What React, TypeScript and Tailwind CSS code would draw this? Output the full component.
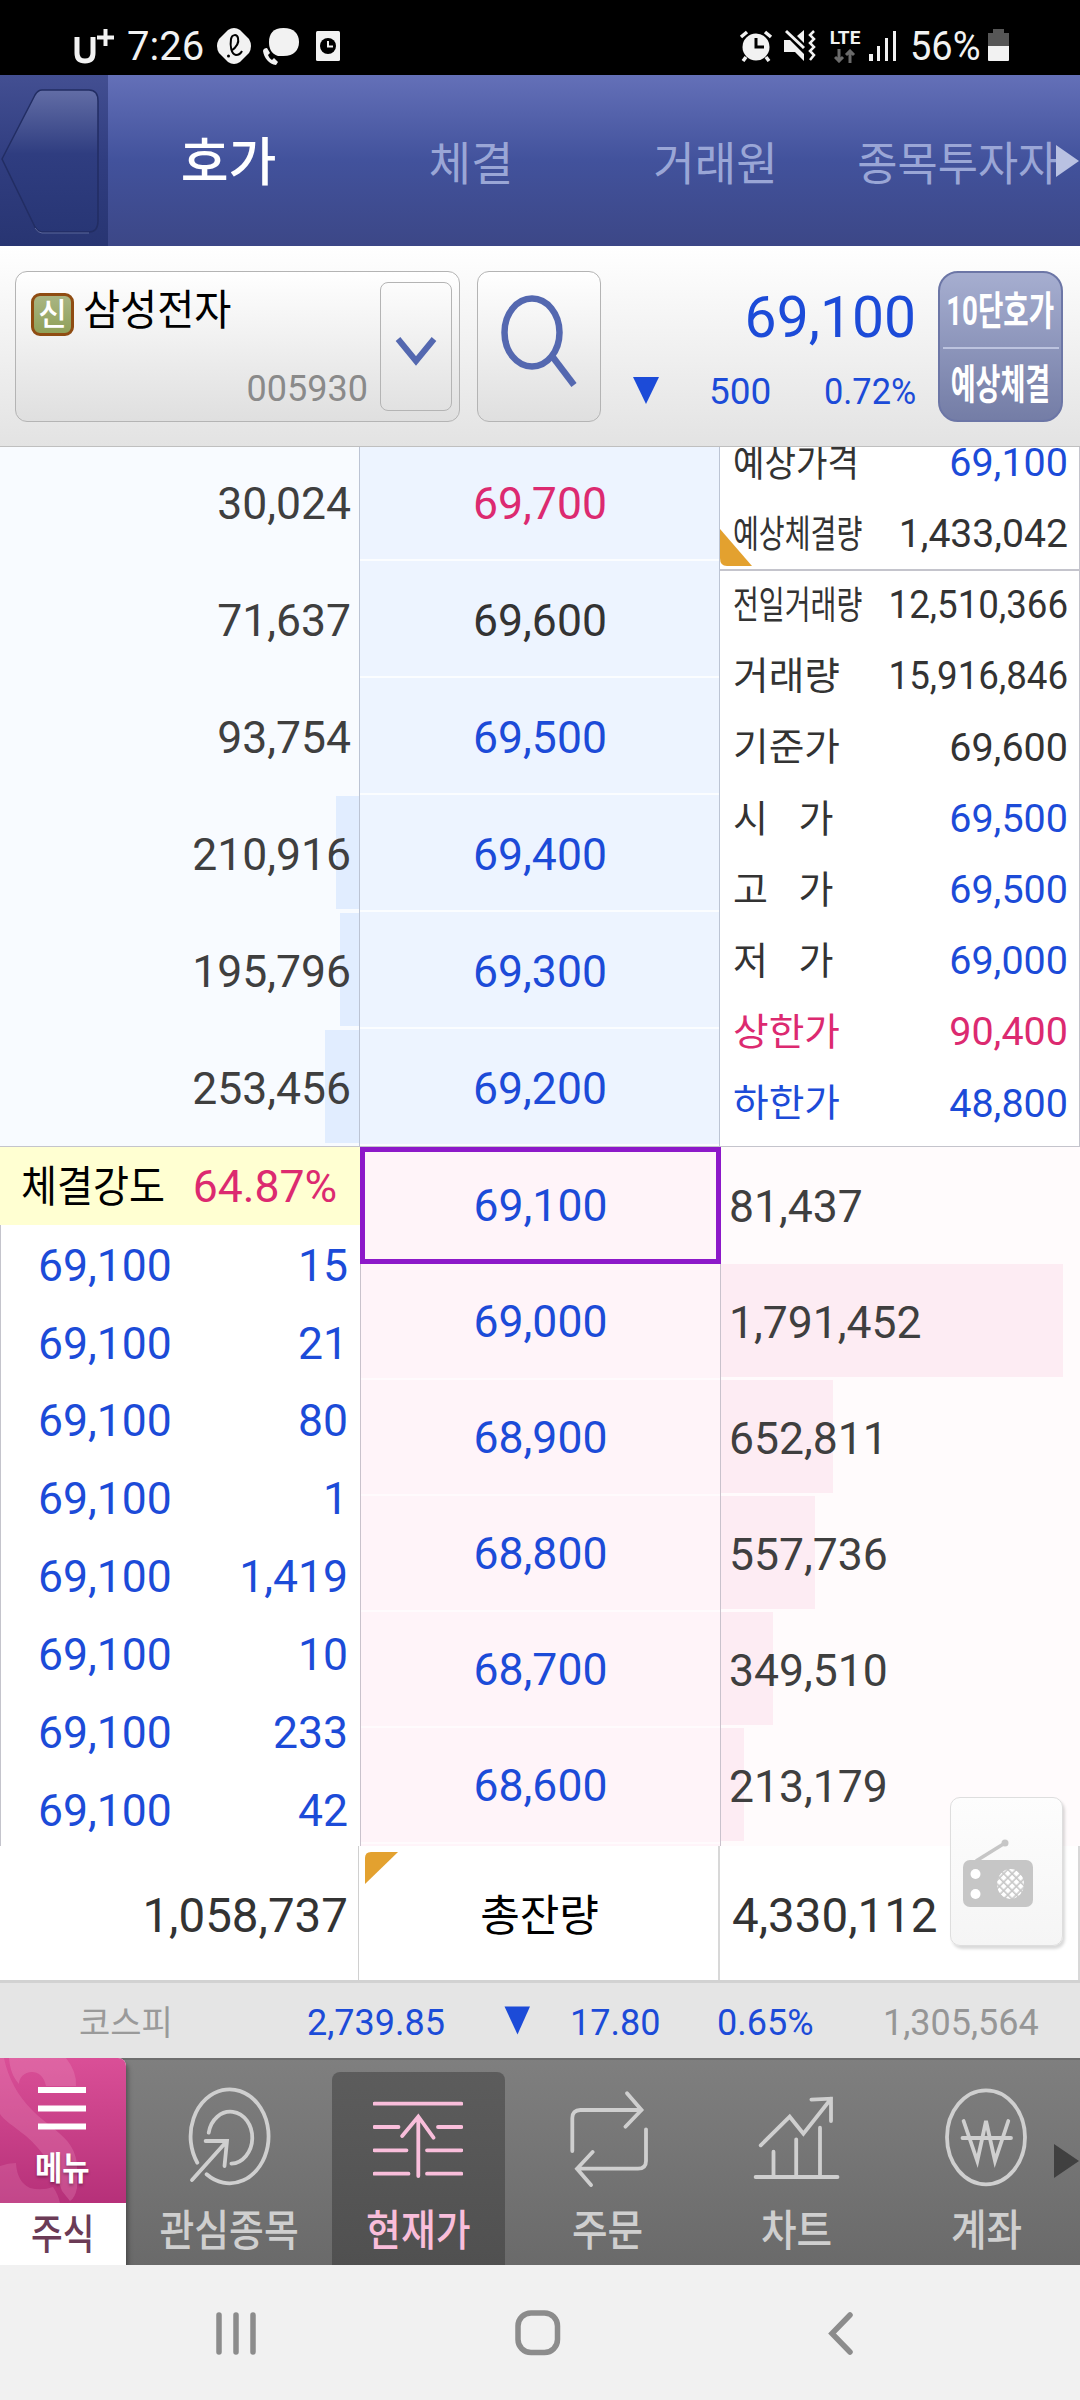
import React from 'react';
import clsx from 'clsx';

const BLUE = 'text-[#1c4bd8]';
const PINK = 'text-[#dc2a70]';
const DARK = 'text-[#333333]';

const tabs = [
    {label: '호가', className: 'text-[52px] font-medium text-white -ml-[2px]'},
    {label: '체결', className: 'text-[46px] text-[#9aa6d6] -ml-[3px]'},
    {label: '거래원', className: 'text-[46px] text-[#9aa6d6] scale-x-[0.98]'},
    {label: '종목투자자', className: 'text-[46px] text-[#9aa6d6] scale-x-[0.95] -ml-[2px]'},
];

const asks = [
    {volume: '30,024', price: '69,700', color: PINK, bar: 0},
    {volume: '71,637', price: '69,600', color: DARK, bar: 0},
    {volume: '93,754', price: '69,500', color: BLUE, bar: 0},
    {volume: '210,916', price: '69,400', color: BLUE, bar: 23},
    {volume: '195,796', price: '69,300', color: BLUE, bar: 19},
    {volume: '253,456', price: '69,200', color: BLUE, bar: 34},
];

const bids = [
    {volume: '81,437', price: '69,100', bar: 0},
    {volume: '1,791,452', price: '69,000', bar: 342},
    {volume: '652,811', price: '68,900', bar: 112},
    {volume: '557,736', price: '68,800', bar: 94},
    {volume: '349,510', price: '68,700', bar: 52},
    {volume: '213,179', price: '68,600', bar: 23},
];

const infos = [
    {label: '예상가격', value: '69,100', color: DARK, valueColor: BLUE, labelScale: 'scale-x-[0.9]', valueScale: ''},
    {label: '예상체결량', value: '1,433,042', color: DARK, valueColor: DARK, labelScale: 'scale-x-[0.74]', valueScale: 'scale-x-[0.99]'},
    {label: '전일거래량', value: '12,510,366', color: DARK, valueColor: DARK, labelScale: 'scale-x-[0.74]', valueScale: 'scale-x-[0.93]'},
    {label: '거래량', value: '15,916,846', color: DARK, valueColor: DARK, labelScale: 'scale-x-[1.02]', valueScale: 'scale-x-[0.93]'},
    {label: '기준가', value: '69,600', color: DARK, valueColor: DARK, labelScale: 'scale-x-[1.02]', valueScale: ''},
    {label: '시 가', value: '69,500', color: DARK, valueColor: BLUE, labelScale: '[word-spacing:21px]', valueScale: ''},
    {label: '고 가', value: '69,500', color: DARK, valueColor: BLUE, labelScale: '[word-spacing:21px]', valueScale: ''},
    {label: '저 가', value: '69,000', color: DARK, valueColor: BLUE, labelScale: '[word-spacing:21px]', valueScale: ''},
    {label: '상한가', value: '90,400', color: PINK, valueColor: PINK, labelScale: 'scale-x-[1.02]', valueScale: ''},
    {label: '하한가', value: '48,800', color: BLUE, valueColor: BLUE, labelScale: 'scale-x-[1.02]', valueScale: ''},
];

const trades = ['15', '21', '80', '1', '1,419', '10', '233', '42'];

const StatusBar: React.FC = () => (
    <div className="h-[75px] bg-black text-[#f2f2f2] relative">
        <div className="h-full flex items-center justify-between pl-[73px] pr-[71px] pt-[19px]">
            <div className="flex items-center h-[56px]">
                <svg width="42" height="40" viewBox="0 0 42 40" fill="none" stroke="currentColor">
                    <path d="M4 10V26q0 8 8 8t8-8V10" strokeWidth="5"/>
                    <path d="M24 10.500H41M32.500 2V19" strokeWidth="4"/>
                </svg>
                <span className="text-[40px] leading-none ml-[12px]">7:26</span>
                <svg className="ml-[12px] -mt-[2px]" width="36" height="38" viewBox="0 0 36 38">
                    <path d="M12 3q6-4 12 0l9 9q4 7 0 14l-9 9q-6 4-12 0l-9-9q-4-7 0-14z" fill="#f2f2f2"/>
                    <path d="M15 24c6-4 8-9 7-13-1-4-6-4-7 1-1 7 0 15 5 16 3 0 5-2 6-4" fill="none" stroke="#000" strokeWidth="2"/>
                    <circle cx="12.500" cy="29" r="1.500"/>
                </svg>
                <svg className="ml-[10px] -mt-[2px]" width="38" height="38" viewBox="0 0 38 38" fill="#f2f2f2">
                    <path d="M21.500 1C32 1 37 7 37 15s-5 14-15.500 14H16C9 27 7 21 7 15 7 7 11 1 21.500 1z"/>
                    <path d="M1 24c1 7 6 13 13 14l2-3-4-4-2 2c-2-1-3-3-4-5l2-2-3-5c-2 0-4 1-4 3z"/>
                </svg>
                <svg className="ml-[15px] -mt-[2px]" width="26" height="32" viewBox="0 0 26 32">
                    <rect x="1" y="1" width="24" height="30" rx="1.500" fill="#f2f2f2"/>
                    <circle cx="13" cy="16" r="8"/>
                    <path d="M13 11v5.500h5" fill="none" stroke="#f2f2f2" strokeWidth="2"/>
                </svg>
            </div>
            <div className="flex items-center h-[56px]">
                <svg className="-mt-[2px]" width="34" height="32" viewBox="0 0 34 32">
                    <circle cx="17" cy="17" r="13.500" fill="#f2f2f2"/>
                    <path d="M2 7l6-5M32 7l-6-5M7 27l-3 4M27 27l3 4" stroke="#f2f2f2" strokeWidth="3.500"/>
                    <path d="M17 8v9h8" fill="none" stroke="#000" strokeWidth="3"/>
                </svg>
                <svg className="ml-[11px] -mt-[2px]" width="32" height="34" viewBox="0 0 32 34">
                    <path d="M0 11h6l14 14v7l-9-9H0zM13 7l7-6v13z" fill="#f2f2f2"/>
                    <path d="M2 2l18 17" stroke="#f2f2f2" strokeWidth="3"/>
                    <path d="M30 2l-4 4 4 4-4 4 4 4-4 4 4 4-4 5" fill="none" stroke="#f2f2f2" strokeWidth="2.500"/>
                </svg>
                <div className="ml-[14px] -mt-[2px] w-[30px] flex flex-col items-center">
                    <span className="text-[19px] leading-[16px] font-bold">LTE</span>
                    <svg className="mt-[3px]" width="22" height="14" viewBox="0 0 22 14" fill="none" stroke="#6b6b6b" strokeWidth="3">
                        <path d="M5 0v12M1 8l4 4 4-4M16 14V2M12 6l4-4 4 4"/>
                    </svg>
                </div>
                <svg className="ml-[9px] -mt-[2px]" width="28" height="30" viewBox="0 0 28 30" fill="#f2f2f2">
                    <rect x="0" y="23" width="4" height="7"/>
                    <rect x="8" y="15" width="3" height="15"/>
                    <rect x="16" y="7" width="3" height="23"/>
                    <rect x="24" y="0" width="3" height="30"/>
                </svg>
                <span className="ml-[13px] w-[71px] text-[40px] leading-none scale-x-[0.95] origin-left">56%</span>
                <svg className="ml-[7px] -mt-[4px]" width="21" height="32" viewBox="0 0 21 32">
                    <path d="M5 0h11v4h5v13H0V4h5z" fill="#565656"/>
                    <path d="M0 17h21v14q0 1-1 1H1q-1 0-1-1z" fill="#f2f2f2"/>
                </svg>
            </div>
        </div>
    </div>
);

const Header: React.FC = () => (
    <div className="h-[171px] flex overflow-hidden relative bg-linear-to-b from-[#6470b8] via-[#42529c] to-[#3c4787]">
        <div className="w-[108px] shrink-0 bg-linear-to-b from-[#434f92] via-[#303d80] to-[#283572]">
            <svg width="108" height="171" viewBox="0 0 108 171">
                <defs>
                    <linearGradient id="back" x1="0" y1="0" x2="0" y2="1">
                        <stop offset="0" stopColor="#626da6"/>
                        <stop offset="0.45" stopColor="#2f3d80"/>
                        <stop offset="1" stopColor="#283675"/>
                    </linearGradient>
                </defs>
                <path d="M2 84L35 20q3-5 7-5H89q9 0 9 11V146q0 11-9 11H42q-4 0-7-5z" fill="url(#back)" stroke="#222d63" strokeWidth="1.500"/>
                <path d="M35 153q3 5 7 5H89" fill="none" stroke="#5b669a"/>
            </svg>
        </div>
        {tabs.map((tab) => (
            <div key={tab.label} className="w-[243px] shrink-0 flex items-center justify-center pt-[6px]">
                <span className={clsx('leading-none whitespace-nowrap', tab.className)}>{tab.label}</span>
            </div>
        ))}
        <svg className="absolute right-0 top-[69px]" width="25" height="34" viewBox="0 0 25 34">
            <path d="M1 1L24 17 1 33z" fill="#b9c1e2"/>
        </svg>
    </div>
);

const StockBar: React.FC = () => (
    <div className="h-[201px] flex pt-[25px] pl-[15px] border-b border-[#bfbfbf] bg-linear-to-b from-white to-[#e3e3e3]">
        <div className="w-[445px] h-[151px] flex rounded-[12px] border border-[#b4b4b4] bg-linear-to-b from-white to-[#dfdfdf]">
            <div className="w-[364px] pl-[15px] pt-[15px]">
                <div className="flex">
                    <div className="mt-[6px] w-[43px] h-[43px] rounded-[9px] border-[3px] border-[#8f4c12] bg-linear-to-b from-[#a9b583] to-[#8fa058] flex items-center justify-center">
                        <span className="text-white text-[31px] leading-none font-medium pb-[1px]">신</span>
                    </div>
                    <span className="ml-[9px] mt-[3px] text-[42px] leading-none text-black scale-x-[0.96] origin-left">삼성전자</span>
                </div>
                <div className="mt-[35px] pr-[12px] text-right text-[36px] leading-none text-[#8a8a8a]">005930</div>
            </div>
            <div className="mt-[10px] w-[72px] h-[129px] rounded-[8px] border border-[#b4b4b4] flex justify-center">
                <svg className="mt-[52px]" width="42" height="32" viewBox="0 0 42 32" fill="none">
                    <path d="M3 4L21 26 39 4" stroke="#5468b0" strokeWidth="6"/>
                </svg>
            </div>
        </div>
        <div className="ml-[17px] w-[124px] h-[151px] rounded-[12px] border border-[#b4b4b4] bg-linear-to-b from-white to-[#dfdfdf]">
            <svg width="122" height="149" viewBox="0 0 122 149" fill="none" stroke="#5468b0">
                <ellipse cx="54" cy="60.500" rx="27.500" ry="34" strokeWidth="6.500"/>
                <path d="M74 84L96 113" strokeWidth="6.500"/>
            </svg>
        </div>
        <div className={clsx('w-[315px]', BLUE)}>
            <div className="mt-[18px] text-right text-[57px] leading-none">69,100</div>
            <div className="mt-[27px] flex items-center">
                <svg className="ml-[31px] -mt-[3px] shrink-0" width="28" height="29" viewBox="0 0 28 29">
                    <path d="M1 1H27L14 28z" fill="#1c4bd8"/>
                </svg>
                <span className="ml-[49px] w-[64px] text-[37px] leading-none">500</span>
                <span className="flex-1 flex justify-end text-[37px] leading-none"><span className="scale-x-[0.93] origin-right">0.72%</span></span>
            </div>
        </div>
        <div className="ml-[22px] w-[125px] h-[151px] rounded-[20px] border-2 border-[#6c76a6] bg-linear-to-b from-[#a6aed0] to-[#747da6] flex flex-col items-center font-bold text-white">
            <div className="h-[76px] w-[116px] flex items-center justify-center border-b-2 border-[#bcc3df] pt-[5px]">
                <span className="text-[40px] leading-none whitespace-nowrap scale-x-[0.69]">10단호가</span>
            </div>
            <div className="h-[72px] flex items-center pt-[3px]">
                <span className="text-[41px] leading-none whitespace-nowrap scale-x-[0.66]">예상체결</span>
            </div>
        </div>
    </div>
);

const AskSection: React.FC = () => (
    <div className="h-[700px] flex overflow-hidden border-b border-[#c4c4cc]">
        <div className="w-[360px] -mt-[2px] border-r border-[#bcc4d4] bg-[#f8fbff]">
            {asks.map((ask) => (
                <div key={ask.price} className="h-[117px] flex justify-end relative">
                    <div className="h-[113px] bg-[#e1edff]" style={{width: ask.bar}}/>
                    <span className="absolute right-[8px] top-[1px] h-[117px] flex items-center text-[44.5px] leading-none text-[#3f3f3f]">{ask.volume}</span>
                </div>
            ))}
        </div>
        <div className="w-[360px] -mt-[3px] border-r border-[#bcc4d4] bg-[#edf4ff]">
            {asks.map((ask) => (
                <div key={ask.price} className={clsx('h-[117px] flex items-center justify-center border-b-2 border-[#fbfdff] text-[44.5px] leading-none pt-[6px] pl-[1px]', ask.color)}>
                    {ask.price}
                </div>
            ))}
        </div>
        <div className="w-[360px] relative bg-white border-r border-[#c4c4cc]">
            <svg className="absolute left-0 top-[82px]" width="33" height="38" viewBox="0 0 33 38">
                <path d="M0 0L32 37H7Q0 37 0 29z" fill="#e3a12f"/>
            </svg>
            <div className="relative -mt-[20px]">
                {infos.map((info, i) => (
                    <div
                        key={info.label}
                        className={clsx(
                            'flex items-center justify-between pl-[13px] pr-[11px] text-[39.500px] leading-none whitespace-nowrap',
                            i === 1 ? 'h-[73.2px] -mb-[2px] border-b-2 border-[#c4c4cc]' : 'h-[71.2px]'
                        )}
                    >
                        <span className={clsx('text-[38px] origin-left w-0', info.color, info.labelScale)}>{info.label}</span>
                        <span className={clsx('origin-right', info.valueColor, info.valueScale)}>{info.value}</span>
                    </div>
                ))}
            </div>
        </div>
    </div>
);

const BidSection: React.FC = () => (
    <div className="h-[699px] flex text-[44.5px] leading-none">
        <div className="w-[360px] bg-white">
            <div className="h-[78px] flex items-center bg-[#ffffd2] pl-[21px] pr-[23px] justify-between pt-[3px]">
                <span className="w-[150px] text-[43px] whitespace-nowrap text-black scale-x-[0.91] origin-left">체결강도</span>
                <span className={PINK}>64.87%</span>
            </div>
            <div className="border-l border-[#c4c4cc] h-[621px] pt-[2px]">
                {trades.map((amount) => (
                    <div key={amount} className={clsx('h-[77.9px] flex items-center justify-between pl-[37px] pr-[12px]', BLUE)}>
                        <span>69,100</span>
                        <span>{amount}</span>
                    </div>
                ))}
            </div>
        </div>
        <div className={clsx('w-[361px] border-x border-[#c9c2cc] bg-[#fff4f9]', BLUE)}>
            {bids.map((bid, i) => (
                <div
                    key={bid.price}
                    className={clsx('flex items-center justify-center', i === 0 ? 'relative h-[117px] pt-[2px] -mx-px border-5 border-[#8d18c9]' : 'h-[116px] pt-[3px] border-b-2 border-[#fffbfd]')}
                >
                    {bid.price}
                </div>
            ))}
        </div>
        <div className="w-[359px] bg-[#fffbfc] pt-[1px]">
            {bids.map((bid) => (
                <div key={bid.price} className="h-[116px] relative">
                    <div className="h-[113px] bg-[#fdecf3]" style={{width: bid.bar}}/>
                    <span className="absolute left-[8px] top-[1px] h-[116px] flex items-center text-[#3f3f3f]">{bid.volume}</span>
                </div>
            ))}
        </div>
    </div>
);

const TotalRow: React.FC = () => (
    <div className="h-[137px] flex relative bg-white border-b-3 border-[#d2d2d2] text-[47.5px] leading-none text-[#333333]">
        <div className="w-[359px] flex items-center justify-end pr-[10px] pt-[7px] border-r border-[#d0d0d0]">1,058,737</div>
        <div className="w-[361px] flex items-center justify-center border-r-2 border-[#d8d8d8] pt-[7px] pl-[2px] text-[43px] text-black relative">
            <svg className="absolute left-[6px] top-[6px]" width="33" height="33" viewBox="0 0 33 33">
                <path d="M0 6Q0 0 6 0H33L0 32z" fill="#e3a12f"/>
            </svg>
            총잔량
        </div>
        <div className="flex-1 flex items-center pl-[12px] pt-[7px] border-r-2 border-[#d8d8d8]">4,330,112</div>
        <div className="absolute left-[950px] -top-[49px] w-[113px] h-[149px] rounded-[10px] border border-[#dedede] bg-linear-to-b from-[#fdfdfd] to-[#f5f5f5] shadow-[2px_3px_3px_rgba(0,0,0,0.15)]">
            <svg width="111" height="147" viewBox="0 0 111 147">
                <path d="M25 63L54 45" stroke="#c6c6c6" strokeWidth="3.500"/>
                <circle cx="54" cy="45" r="3.500" fill="#c6c6c6"/>
                <rect x="12" y="62" width="70" height="47" rx="7" fill="#c6c6c6"/>
                <circle cx="24.500" cy="76" r="5" fill="#fff"/>
                <circle cx="24.500" cy="96" r="5" fill="#fff"/>
                <defs>
                    <pattern id="mesh" width="6" height="6" patternUnits="userSpaceOnUse" patternTransform="rotate(45 59 86)">
                        <rect width="4.400" height="4.400" fill="#fff"/>
                    </pattern>
                </defs>
                <ellipse cx="59.500" cy="86" rx="13.500" ry="15" fill="url(#mesh)"/>
            </svg>
        </div>
    </div>
);

const IndexBar: React.FC = () => (
    <div className={clsx('h-[75px] flex items-center bg-[#e5e5e5] text-[36px] leading-none pt-[4px]', BLUE)}>
        <span className="ml-[79px] w-[228px] text-[34px] text-[#9a9a9a]">코스피</span>
        <span className="w-[197px]">2,739.85</span>
        <svg className="-mt-[4px]" width="27" height="29" viewBox="0 0 27 29">
            <path d="M0.500 0.500H26L13.500 28.500z" fill="#1c4bd8"/>
        </svg>
        <span className="ml-[39px] w-[147px]">17.80</span>
        <span className="w-[166px]">0.65%</span>
        <span className="text-[#969696]">1,305,564</span>
    </div>
);

const menuItems = [
    {
        label: '관심종목',
        scale: 'scale-x-[0.88]',
        icon: (
            <>
                <path d="M13.300 75.700A39 47 0 1 1 22.600 87.300"/>
                <path d="M24.700 45.700A22 26 0 1 1 47.400 76.700"/>
                <path d="M8 93L43 54M21.600 54H43L40.500 79"/>
            </>
        ),
    },
    {
        label: '현재가',
        scale: 'scale-x-[0.88]',
        active: true,
        icon: (
            <path d="M1.300 16.700H88.400M1.300 40H25.500M65 40H88.400M1.300 63.300H33.500M54 63.300H88.400M1.300 86.700H35.500M54 86.700H88.400M45.300 89V30M29.200 49L45.300 29.500 60.500 50.700"/>
        ),
    },
    {
        label: '주문',
        scale: 'scale-x-[0.9]',
        icon: (
            <>
                <path d="M9.300 64V31q0-8 8-8H78.500M64 6.300L78.500 23 62.400 39.700"/>
                <path d="M83 42.300V74q0 7.700-8 7.700H14M29.600 65L14 81.700 28 98"/>
            </>
        ),
    },
    {
        label: '차트',
        scale: 'scale-x-[0.9]',
        icon: (
            <path d="M3.600 90H85.500M21.500 64.700V90M44.200 52.300V90M68 40.700V90M8.700 58.300L37.700 29.700 51.400 46.700 79 11.700M59.400 12.700L79 11.700V34"/>
        ),
    },
    {
        label: '계좌',
        scale: 'scale-x-[0.9]',
        icon: (
            <>
                <ellipse cx="45" cy="50.300" rx="39" ry="47"/>
                <path d="M22.600 34L36.300 74 45 34 54 74 67.300 34M21.500 51H70"/>
            </>
        ),
    },
];

const MenuBar: React.FC = () => (
    <div className="h-[207px] flex relative overflow-hidden bg-linear-to-b from-[#7f7f7f] to-[#6a6a6a] shadow-[inset_0_2px_0_#6e6e6e]">
        <div className="w-[126px] shrink-0 bg-white rounded-tr-[8px] shadow-[2px_4px_5px_rgba(0,0,0,0.35)]">
            <div className="h-[145px] relative overflow-hidden rounded-tr-[8px] bg-linear-to-b from-[#da4f97] to-[#b63079]">
                <svg className="absolute left-0 top-0" width="126" height="145" viewBox="0 0 126 145" fill="#e98cba">
                    <path d="M9 0H66Q77 14 76 28H46C44 18 38 14 32 14 24 14 19 20 19 26 12 18 10 10 9 0z" fillOpacity="0.35"/>
                    <path d="M0 0H4C8 20 18 38 32 52 46 66 58 72 68 84 74 92 77 100 77 110V130Q75 140 70 143L62 133C56 112 42 92 26 78 12 67 4 62 0 56z" fillOpacity="0.3"/>
                    <path d="M0 108Q8 105 16 105 17 124 30 130 42 133 53 129 58 136 60 145H0z" fillOpacity="0.25"/>
                </svg>
                <div className="relative flex flex-col items-center pt-[29px] pr-[2px]">
                    <svg width="48" height="44" viewBox="0 0 48 44" stroke="#fff" strokeWidth="6">
                        <path d="M0 3H48M0 21.500H48M0 39.500H48"/>
                    </svg>
                    <span className="mt-[21px] text-[33px] leading-none font-bold text-white scale-x-[0.9] [text-shadow:0_2px_3px_rgba(0,0,0,0.3)]">메뉴</span>
                </div>
            </div>
            <div className="h-[62px] flex items-center justify-center pt-[2px]">
                <span className="text-[41px] leading-none font-medium text-[#6b3b56] scale-x-[0.84]">주식</span>
            </div>
        </div>
        <div className="ml-[8.500px] flex shrink-0">
            {menuItems.map((item) => (
                <div key={item.label} className="w-[189.300px] flex justify-center">
                    <div
                        className={clsx(
                            'mt-[14px] w-[173px] h-[193px] rounded-t-[8px] flex flex-col items-center',
                            item.active ? 'text-[#f9bedb] bg-linear-to-b from-[#5c5c5c] to-[#505050]' : 'text-[#cfcfcf]'
                        )}
                    >
                        <svg className="mt-[15px]" width="90" height="100" viewBox="0 0 90 100" fill="none" stroke="currentColor" strokeWidth="3.800" strokeLinecap="round">
                            {item.icon}
                        </svg>
                        <span className={clsx('mt-[23px] text-[43px] leading-none font-medium whitespace-nowrap', item.scale)}>{item.label}</span>
                    </div>
                </div>
            ))}
        </div>
        <svg className="absolute right-0 top-[85px]" width="26" height="36" viewBox="0 0 26 36">
            <path d="M0 1L25 18 0 35z" fill="#404040"/>
        </svg>
    </div>
);

const SystemBar: React.FC = () => (
    <div className="h-[135px] bg-[#f1f1f1] flex pt-[44px] text-[#8c8c8c]">
        <svg className="ml-[215px]" width="42" height="48" viewBox="0 0 42 48" stroke="currentColor" strokeWidth="5.500" strokeLinecap="round">
            <path d="M4 6V43M21 6V43M38 6V43"/>
        </svg>
        <svg className="ml-[257px]" width="48" height="48" viewBox="0 0 48 48" fill="none" stroke="currentColor" strokeWidth="5.500">
            <rect x="4" y="4" width="39.500" height="39.500" rx="13"/>
        </svg>
        <svg className="ml-[264px]" width="30" height="48" viewBox="0 0 30 48" fill="none" stroke="currentColor" strokeWidth="5.500" strokeLinecap="round">
            <path d="M24 6L6 24.500 24 43"/>
        </svg>
    </div>
);

const App: React.FC = () => {
    return (
        <div className="w-[1080px] h-[2400px] overflow-hidden bg-white font-['Roboto','Noto_Sans_CJK_KR',sans-serif]">
            <StatusBar/>
            <Header/>
            <StockBar/>
            <AskSection/>
            <BidSection/>
            <TotalRow/>
            <IndexBar/>
            <MenuBar/>
            <SystemBar/>
        </div>
    );
};

export default App;
